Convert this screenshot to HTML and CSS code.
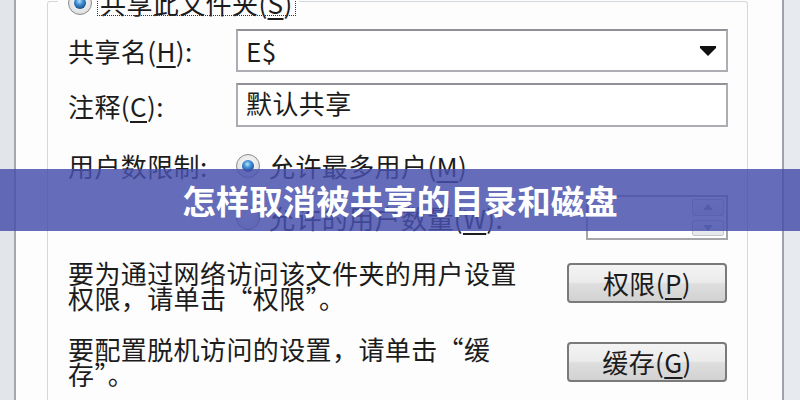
FILE: index.html
```html
<!DOCTYPE html>
<html lang="zh-CN">
<head>
<meta charset="utf-8">
<title>共享</title>
<link rel="stylesheet" href="styles.css">
</head>
<body>
<div class="window">
  <div class="frame frame-left"></div>
  <div class="pane">
    <div class="group">
      <div class="legend">
        <span class="radio checked"></span>
        <span class="focus">共享此文件夹(<u>S</u>)</span>
      </div>
      <div class="field-row">
        <span class="label">共享名(<u>H</u>):</span>
        <div class="combo">
          <span class="value">E$</span>
          <svg class="arrow" width="16" height="10" viewBox="0 0 16 10"><polygon points="0,0 16,0 16,2 8,10 0,2" fill="#111"/></svg>
        </div>
      </div>
      <div class="field-row comment-row">
        <span class="label">注释(<u>C</u>):</span>
        <div class="textbox"><span class="value">默认共享</span></div>
      </div>
      <div class="limit">
        <span class="label">用户数限制:</span>
        <div class="options">
          <div class="opt opt1"><span class="radio checked"></span><span>允许最多用户(<u>M</u>)</span></div>
          <div class="opt opt2">
            <span class="radio"></span><span>允许的用户数量(<u>W</u>):</span>
            <div class="spin">
              <div class="spin-btns">
                <span class="spin-btn"><svg width="10" height="6" viewBox="0 0 10 6"><polygon points="5,0 10,6 0,6" fill="#8a9bb0"/></svg></span>
                <span class="spin-btn"><svg width="10" height="6" viewBox="0 0 10 6"><polygon points="0,0 10,0 5,6" fill="#8a9bb0"/></svg></span>
              </div>
            </div>
          </div>
        </div>
      </div>
      <div class="action action-first">
        <p>要为通过网络访问该文件夹的用户设置<br>权限，请单击“权限”。</p>
        <button class="btn btn-first">权限(<u>P</u>)</button>
      </div>
      <div class="action action-second">
        <p>要配置脱机访问的设置，请单击“缓<br>存”。</p>
        <button class="btn btn-second">缓存(<u>G</u>)</button>
      </div>
    </div>
  </div>
  <div class="frame frame-right"></div>
</div>
<div class="banner">怎样取消被共享的目录和磁盘</div>
</body>
</html>
```

FILE: styles.css
```css
html, body {
  margin: 0;
  padding: 0;
}
body {
  width: 800px;
  height: 400px;
  overflow: hidden;
  position: relative;
  background: #ffffff;
  font-family: "Noto Sans CJK SC", "Liberation Sans", sans-serif;
  font-size: 26px;
  letter-spacing: 0.4px;
  color: #1c1c1c;
}
u {
  text-decoration: underline;
  text-underline-offset: 4px;
  text-decoration-thickness: 1.5px;
}
.window {
  display: flex;
  height: 400px;
}
.frame-left {
  width: 14px;
  background: #e2e5ea;
  border-right: 2px solid #a3a6aa;
}
.frame-right {
  width: 16px;
  background: #e7eaef;
  border-left: 2px solid #9ea3aa;
}
.pane {
  flex: 1;
  background: #fdfdfd;
  padding: 1px 34px 0 31px;
  overflow: hidden;
}
.group {
  border: 1px solid #d3d8dc;
  border-bottom: none;
  border-radius: 3px 3px 0 0;
  height: 420px;
  padding: 0 19px 0 20px;
}
.legend {
  display: flex;
  width: fit-content;
  align-items: center;
  height: 24px;
  margin-top: -11px;
  margin-left: -10px;
  padding: 0 4px 0 10px;
  background: #fdfdfd;
  line-height: 24px;
}
.focus {
  margin-left: 6px;
  padding: 0 2px;
  outline: 1px dotted #333;
  outline-offset: 0;
}
.radio {
  flex: none;
  width: 24px;
  height: 24px;
  border-radius: 50%;
  border: 1px solid #8a8c8f;
  background: radial-gradient(circle at 50% 40%, #fafafa 0%, #e8e8e8 55%, #cfd2d6 100%);
  position: relative;
  box-sizing: border-box;
}
.radio.checked::after {
  content: "";
  position: absolute;
  left: 5px;
  top: 5px;
  width: 12px;
  height: 12px;
  border-radius: 50%;
  background: radial-gradient(circle at 45% 35%, #b9e2fb 0%, #3f8fd4 35%, #1a4e8e 75%, #0f3266 100%);
}
.field-row {
  display: flex;
  align-items: center;
  height: 43px;
  margin-top: 14px;
}
.comment-row {
  margin-top: 11px;
  height: 44px;
}
.label {
  width: 168px;
  flex: none;
}
.combo, .textbox {
  flex: 1;
  height: 100%;
  box-sizing: border-box;
  border: 2px solid #abadb3;
  border-top-color: #8f9196;
  background: #ffffff;
  display: flex;
  align-items: center;
  padding: 0 10px 0 8px;
}
.textbox {
  align-items: flex-start;
  padding-top: 0;
  line-height: 36px;
}
.value {
  flex: 1;
}
.limit {
  display: flex;
  margin-top: 26px;
  line-height: 26px;
}
.options {
  flex: 1;
}
.opt {
  display: flex;
  align-items: center;
  gap: 9px;
}
.opt1 {
  height: 26px;
}
.opt2 {
  height: 45px;
  margin-top: 16px;
}
.spin {
  margin-left: auto;
  width: 142px;
  height: 45px;
  box-sizing: border-box;
  border: 2px solid #a4a6aa;
  background: #ffffff;
  display: flex;
  justify-content: flex-end;
  padding: 2px 2px 2px 0;
}
.spin-btns {
  width: 32px;
  display: flex;
  flex-direction: column;
  gap: 4px;
}
.spin-btn {
  flex: 1;
  border: 1px solid #c2c6cc;
  border-radius: 2px;
  background: linear-gradient(#f7f8fa, #e3e6ea);
  display: flex;
  align-items: center;
  justify-content: center;
}
.action {
  display: flex;
  justify-content: space-between;
  align-items: flex-start;
}
.action p {
  margin: 0;
  line-height: 25px;
}
.action-first {
  margin-top: 20px;
}
.action-second {
  margin-top: 26px;
}
.btn {
  width: 160px;
  height: 40px;
  margin-right: 1px;
  box-sizing: border-box;
  border: 2px solid #7a7a7a;
  border-radius: 4px;
  background: linear-gradient(#f4f4f4 0%, #ebebeb 48%, #dedede 52%, #d2d2d2 100%);
  font: inherit;
  letter-spacing: inherit;
  color: #1c1c1c;
  padding: 0;
  line-height: 36px;
}
.btn-first {
  margin-top: 3px;
}
.btn-second {
  margin-top: 6px;
}
.banner {
  position: absolute;
  left: 0;
  top: 169px;
  width: 800px;
  height: 62px;
  background: rgba(72, 80, 172, 0.84);
  color: #ffffff;
  font-size: 33.5px;
  font-weight: 700;
  letter-spacing: 0;
  line-height: 62px;
  text-align: center;
}
```
